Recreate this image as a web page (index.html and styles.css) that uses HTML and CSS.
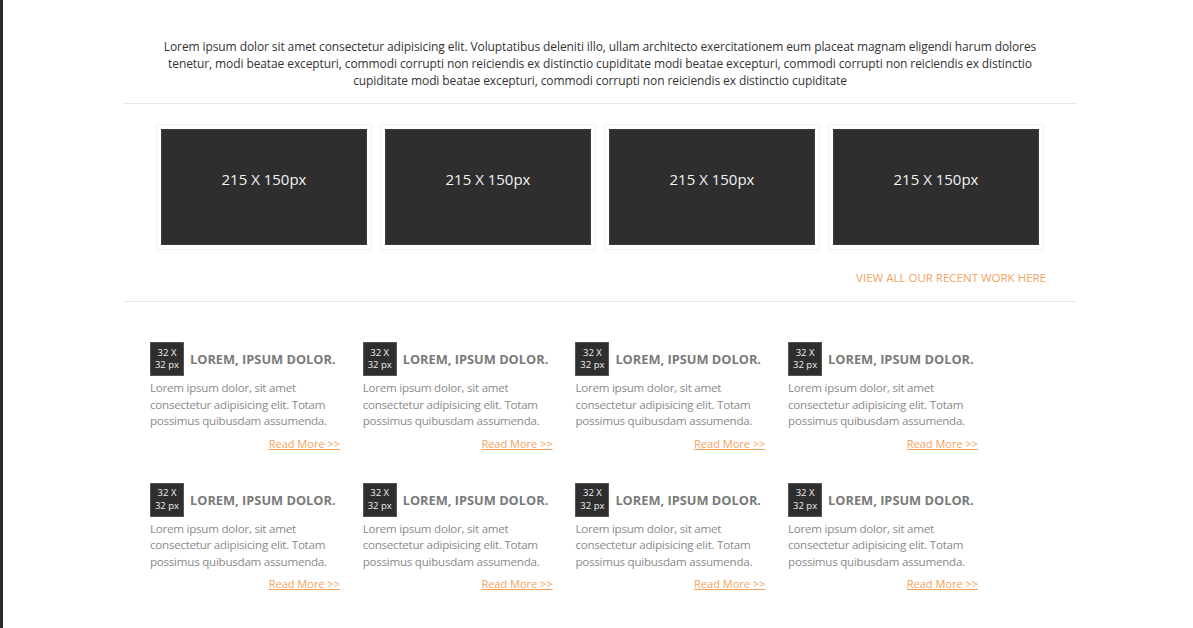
FILE: index.html
```html
<!DOCTYPE html>
<html lang="en">
<head>
<meta charset="utf-8">
<title>Recent work</title>
<link rel="stylesheet" href="styles.css">
</head>
<body>
<div class="page">
  <main class="container">
    <p class="intro">Lorem ipsum dolor sit amet consectetur adipisicing elit. Voluptatibus deleniti illo, ullam architecto exercitationem eum placeat magnam eligendi harum dolores tenetur, modi beatae excepturi, commodi corrupti non reiciendis ex distinctio cupiditate modi beatae excepturi, commodi corrupti non reiciendis ex distinctio cupiditate modi beatae excepturi, commodi corrupti non reiciendis ex distinctio cupiditate</p>
    <hr class="rule">
    <section class="works">
      <div class="thumb"><div class="thumb-inner">215 X 150px</div></div>
      <div class="thumb"><div class="thumb-inner">215 X 150px</div></div>
      <div class="thumb"><div class="thumb-inner">215 X 150px</div></div>
      <div class="thumb"><div class="thumb-inner">215 X 150px</div></div>
    </section>
    <div class="view-all"><a href="#" class="view-link">VIEW ALL OUR RECENT WORK HERE</a></div>
    <hr class="rule">
    <section class="features">
      <div class="card">
        <div class="card-head"><div class="icon">32 X<br>32 px</div><h3 class="card-title">LOREM, IPSUM DOLOR.</h3></div>
        <p class="card-text">Lorem ipsum dolor, sit amet consectetur adipisicing elit. Totam possimus quibusdam assumenda.</p>
        <div class="more"><a href="#" class="more-link">Read More &gt;&gt;</a></div>
      </div>
      <div class="card">
        <div class="card-head"><div class="icon">32 X<br>32 px</div><h3 class="card-title">LOREM, IPSUM DOLOR.</h3></div>
        <p class="card-text">Lorem ipsum dolor, sit amet consectetur adipisicing elit. Totam possimus quibusdam assumenda.</p>
        <div class="more"><a href="#" class="more-link">Read More &gt;&gt;</a></div>
      </div>
      <div class="card">
        <div class="card-head"><div class="icon">32 X<br>32 px</div><h3 class="card-title">LOREM, IPSUM DOLOR.</h3></div>
        <p class="card-text">Lorem ipsum dolor, sit amet consectetur adipisicing elit. Totam possimus quibusdam assumenda.</p>
        <div class="more"><a href="#" class="more-link">Read More &gt;&gt;</a></div>
      </div>
      <div class="card">
        <div class="card-head"><div class="icon">32 X<br>32 px</div><h3 class="card-title">LOREM, IPSUM DOLOR.</h3></div>
        <p class="card-text">Lorem ipsum dolor, sit amet consectetur adipisicing elit. Totam possimus quibusdam assumenda.</p>
        <div class="more"><a href="#" class="more-link">Read More &gt;&gt;</a></div>
      </div>
      <div class="card">
        <div class="card-head"><div class="icon">32 X<br>32 px</div><h3 class="card-title">LOREM, IPSUM DOLOR.</h3></div>
        <p class="card-text">Lorem ipsum dolor, sit amet consectetur adipisicing elit. Totam possimus quibusdam assumenda.</p>
        <div class="more"><a href="#" class="more-link">Read More &gt;&gt;</a></div>
      </div>
      <div class="card">
        <div class="card-head"><div class="icon">32 X<br>32 px</div><h3 class="card-title">LOREM, IPSUM DOLOR.</h3></div>
        <p class="card-text">Lorem ipsum dolor, sit amet consectetur adipisicing elit. Totam possimus quibusdam assumenda.</p>
        <div class="more"><a href="#" class="more-link">Read More &gt;&gt;</a></div>
      </div>
      <div class="card">
        <div class="card-head"><div class="icon">32 X<br>32 px</div><h3 class="card-title">LOREM, IPSUM DOLOR.</h3></div>
        <p class="card-text">Lorem ipsum dolor, sit amet consectetur adipisicing elit. Totam possimus quibusdam assumenda.</p>
        <div class="more"><a href="#" class="more-link">Read More &gt;&gt;</a></div>
      </div>
      <div class="card">
        <div class="card-head"><div class="icon">32 X<br>32 px</div><h3 class="card-title">LOREM, IPSUM DOLOR.</h3></div>
        <p class="card-text">Lorem ipsum dolor, sit amet consectetur adipisicing elit. Totam possimus quibusdam assumenda.</p>
        <div class="more"><a href="#" class="more-link">Read More &gt;&gt;</a></div>
      </div>
    </section>
  </main>
</div>
</body>
</html>
```
FILE: styles.css
```css
* { box-sizing: border-box; }
html, body { margin: 0; padding: 0; background: #fff; }
body {
  font-family: "Open Sans", "Noto Sans", sans-serif;
  color: #333;
  height: 628px;
  overflow: hidden;
}
.page {
  border-left: 3px solid #2b2b2b;
  min-height: 628px;
  padding-left: 120px;
}
.container {
  width: 954px;
  padding-top: 38px;
}
.intro {
  margin: 0;
  padding: 0 36px;
  text-align: center;
  font-size: 12px;
  letter-spacing: -0.1px;
  line-height: 17px;
  color: #333;
}
.rule {
  margin: 14px 0 0;
  border: 0;
  border-top: 1px solid #e8e8e8;
  height: 0;
}
.works {
  display: flex;
  gap: 8px;
  padding: 20px 33px 0;
}
.thumb {
  width: 216px;
  height: 126px;
  padding: 4px;
  border: 1px solid #f2f2f2;
  background: #fff;
}
.thumb-inner {
  width: 100%;
  height: 100%;
  background: #2e2e2e;
  border: 1px solid #3c3c3c;
  color: #f2f2f2;
  font-size: 15px;
  display: flex;
  align-items: flex-start;
  justify-content: center;
  padding-top: 39px;
}
.view-all {
  display: flex;
  justify-content: flex-end;
  padding: 19px 31px 0 0;
  height: 51px;
}
.view-link {
  color: #f5a25d;
  font-size: 11.5px;
  text-decoration: none;
  line-height: 17px;
}
.view-all + .rule { margin-top: 0; }
.features {
  display: grid;
  grid-template-columns: repeat(4, 190px);
  column-gap: 22.7px;
  row-gap: 32px;
  padding: 40px 0 0 27px;
}
.card { display: flex; flex-direction: column; }
.card-head {
  display: flex;
  align-items: center;
  gap: 6px;
}
.icon {
  width: 34px;
  height: 34px;
  flex: none;
  background: #2e2e2e;
  border: 1px solid #555;
  color: #eee;
  font-size: 9.5px;
  line-height: 12.5px;
  text-align: center;
  display: flex;
  align-items: center;
  justify-content: center;
}
.card-title {
  margin: 0;
  font-size: 12.8px;
  font-weight: 700;
  color: #7a7a7a;
  white-space: nowrap;
}
.card-text {
  margin: 4px 0 0;
  font-size: 11.6px;
  letter-spacing: -0.25px;
  line-height: 16.5px;
  color: #8a8a8a;
}
.more {
  display: flex;
  justify-content: flex-end;
  margin-top: 7px;
}
.more-link {
  color: #f5a25d;
  font-size: 11px;
  line-height: 14px;
}
```
